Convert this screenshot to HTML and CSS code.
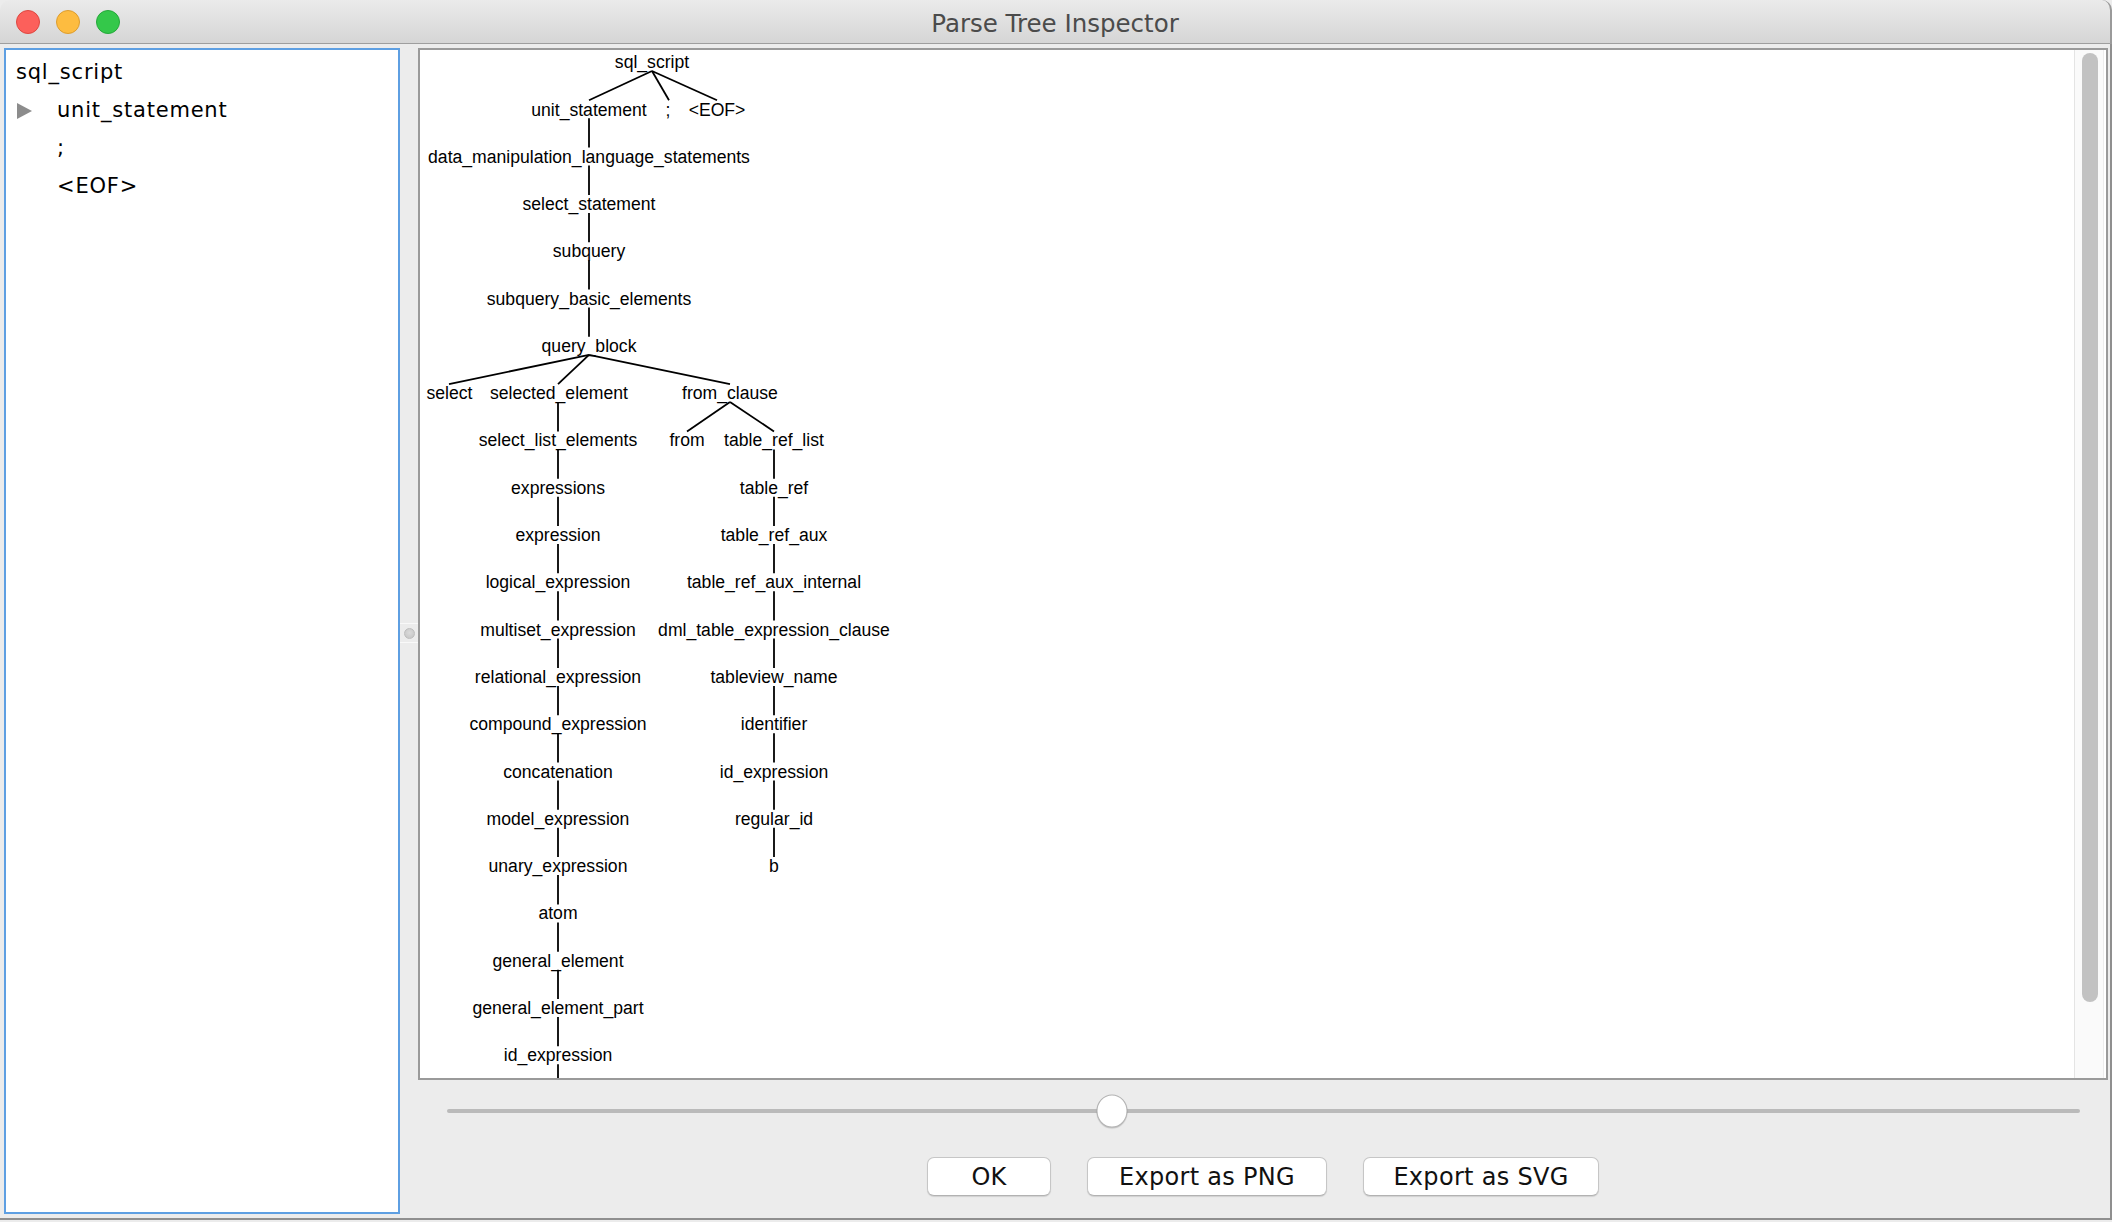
FILE: index.html
```html
<!DOCTYPE html>
<html>
<head>
<meta charset="utf-8">
<title>Parse Tree Inspector</title>
<link rel="stylesheet" href="styles.css">
</head>
<body>
<div class="window">
  <header class="titlebar">
    <div class="lights">
      <span class="light red"></span>
      <span class="light yellow"></span>
      <span class="light green"></span>
    </div>
    <div class="title">Parse Tree Inspector</div>
    <div></div>
  </header>
  <main class="main">
    <section class="outline">
      <div class="row root">sql_script</div>
      <div class="row child">
        <span class="twisty"><svg width="15" height="16" viewBox="0 0 15 16"><polygon points="0,0 15,8 0,16" fill="#8c8c8c"/></svg></span>
        <span>unit_statement</span>
      </div>
      <div class="row child"><span class="twisty"></span><span>;</span></div>
      <div class="row child"><span class="twisty"></span><span>&lt;EOF&gt;</span></div>
    </section>
    <div class="divider">
      <div class="handle"><span class="knob"></span></div>
    </div>
    <section class="right">
      <div class="treepanel">
        <div class="canvas">
          <svg class="tree" width="1653" height="1028" viewBox="0 0 1653 1028">
            <g class="edges" stroke="#000" stroke-width="1.8" fill="none">
              <line x1="232" y1="21" x2="169" y2="50.3"/>
              <line x1="232" y1="21" x2="249" y2="50.3"/>
              <line x1="232" y1="21" x2="297" y2="50.3"/>
              <line x1="169" y1="68.3" x2="169" y2="97.6"/>
              <line x1="169" y1="115.6" x2="169" y2="144.9"/>
              <line x1="169" y1="162.9" x2="169" y2="192.2"/>
              <line x1="169" y1="210.2" x2="169" y2="239.5"/>
              <line x1="169" y1="257.5" x2="169" y2="286.8"/>
              <line x1="169" y1="304.8" x2="29" y2="334.1"/>
              <line x1="169" y1="304.8" x2="138" y2="334.1"/>
              <line x1="169" y1="304.8" x2="310" y2="334.1"/>
              <line x1="138" y1="352.1" x2="138" y2="381.4"/>
              <line x1="310" y1="352.1" x2="267" y2="381.4"/>
              <line x1="310" y1="352.1" x2="354" y2="381.4"/>
              <line x1="138" y1="399.4" x2="138" y2="428.7"/>
              <line x1="138" y1="446.7" x2="138" y2="476"/>
              <line x1="138" y1="494" x2="138" y2="523.3"/>
              <line x1="138" y1="541.3" x2="138" y2="570.6"/>
              <line x1="138" y1="588.6" x2="138" y2="617.9"/>
              <line x1="138" y1="635.9" x2="138" y2="665.2"/>
              <line x1="138" y1="683.2" x2="138" y2="712.5"/>
              <line x1="138" y1="730.5" x2="138" y2="759.8"/>
              <line x1="138" y1="777.8" x2="138" y2="807.1"/>
              <line x1="138" y1="825.1" x2="138" y2="854.4"/>
              <line x1="138" y1="872.4" x2="138" y2="901.7"/>
              <line x1="138" y1="919.7" x2="138" y2="949"/>
              <line x1="138" y1="967" x2="138" y2="996.3"/>
              <line x1="138" y1="1014.3" x2="138" y2="1043.6"/>
              <line x1="354" y1="399.4" x2="354" y2="428.7"/>
              <line x1="354" y1="446.7" x2="354" y2="476"/>
              <line x1="354" y1="494" x2="354" y2="523.3"/>
              <line x1="354" y1="541.3" x2="354" y2="570.6"/>
              <line x1="354" y1="588.6" x2="354" y2="617.9"/>
              <line x1="354" y1="635.9" x2="354" y2="665.2"/>
              <line x1="354" y1="683.2" x2="354" y2="712.5"/>
              <line x1="354" y1="730.5" x2="354" y2="759.8"/>
              <line x1="354" y1="777.8" x2="354" y2="807.1"/>
            </g>
            <g class="labels">
              <text x="232" y="18">sql_script</text>
              <text x="169" y="65.8">unit_statement</text>
              <text x="248" y="65.8">;</text>
              <text x="297" y="65.8">&lt;EOF&gt;</text>
              <text x="169" y="112.6">data_manipulation_language_statements</text>
              <text x="169" y="159.9">select_statement</text>
              <text x="169" y="207.2">subquery</text>
              <text x="169" y="254.5">subquery_basic_elements</text>
              <text x="169" y="301.8">query_block</text>
              <text x="29.5" y="349.1">select</text>
              <text x="139" y="349.1">selected_element</text>
              <text x="310" y="349.1">from_clause</text>
              <text x="138" y="396.4">select_list_elements</text>
              <text x="267" y="396.4">from</text>
              <text x="354" y="396.4">table_ref_list</text>
              <text x="138" y="443.7">expressions</text>
              <text x="138" y="491">expression</text>
              <text x="138" y="538.3">logical_expression</text>
              <text x="138" y="585.6">multiset_expression</text>
              <text x="138" y="632.9">relational_expression</text>
              <text x="138" y="680.2">compound_expression</text>
              <text x="138" y="727.5">concatenation</text>
              <text x="138" y="774.8">model_expression</text>
              <text x="138" y="822.1">unary_expression</text>
              <text x="138" y="869.4">atom</text>
              <text x="138" y="916.7">general_element</text>
              <text x="138" y="964">general_element_part</text>
              <text x="138" y="1011.3">id_expression</text>
              <text x="354" y="443.7">table_ref</text>
              <text x="354" y="491">table_ref_aux</text>
              <text x="354" y="538.3">table_ref_aux_internal</text>
              <text x="354" y="585.6">dml_table_expression_clause</text>
              <text x="354" y="632.9">tableview_name</text>
              <text x="354" y="680.2">identifier</text>
              <text x="354" y="727.5">id_expression</text>
              <text x="354" y="774.8">regular_id</text>
              <text x="354" y="822.1">b</text>
            </g>
          </svg>
        </div>
        <div class="vscroll"><div class="thumb"></div></div>
      </div>
      <div class="slider">
        <div class="track"><span class="sthumb"></span></div>
      </div>
      <div class="buttons">
        <button class="btn ok">OK</button>
        <button class="btn png">Export as PNG</button>
        <button class="btn svg">Export as SVG</button>
      </div>
    </section>
  </main>
</div>
</body>
</html>
```

FILE: styles.css
```css
* { box-sizing: border-box; }
html, body { margin: 0; padding: 0; }
body {
  width: 2112px;
  height: 1222px;
  background: #e9e9e9;
  overflow: hidden;
}
.window {
  width: 2112px;
  height: 1222px;
  background: #ececec;
  display: flex;
  flex-direction: column;
}
.titlebar {
  height: 44px;
  flex: none;
  display: grid;
  grid-template-columns: 1fr auto 1fr;
  align-items: center;
  background: linear-gradient(#ebebeb, #d5d5d5);
  border-bottom: 1px solid #9e9e9e;
  border-radius: 10px 10px 0 0;
  border-right: 2px solid #9a9a9a;
}
.lights {
  display: flex;
  gap: 16px;
  padding-left: 16px;
  padding-top: 1px;
}
.light {
  width: 24px;
  height: 24px;
  border-radius: 50%;
  display: block;
}
.red { background: #fc605b; border: 1px solid #de4740; }
.yellow { background: #fdbc40; border: 1px solid #dd9d2e; }
.green { background: #34c84a; border: 1px solid #25a83a; }
.title {
  font-family: "DejaVu Sans", "Liberation Sans", sans-serif;
  font-size: 24.5px;
  color: #4b4b4b;
  padding-top: 3px;
}
.main {
  height: 1176px;
  flex: none;
  display: flex;
  padding: 4px 2px 4px 4px;
  border-right: 2px solid #8f8f8f;
  border-bottom: 2px solid #8f8f8f;
}
.outline {
  width: 396px;
  flex: none;
  background: #fff;
  border: 2px solid #5e9fe2;
  padding: 3px 10px;
  font-family: "DejaVu Sans", "Liberation Sans", sans-serif;
  font-size: 21px;
  letter-spacing: 0.8px;
  color: #000;
}
.row {
  height: 38px;
  line-height: 38px;
  display: flex;
  align-items: center;
  white-space: nowrap;
}
.twisty {
  width: 41px;
  flex: none;
  display: flex;
  align-items: center;
  padding-left: 1px;
  padding-top: 1px;
}
.twisty svg { display: block; }
.divider {
  width: 18px;
  flex: none;
  display: flex;
  flex-direction: column;
  justify-content: center;
  padding-top: 4px;
}
.handle {
  height: 20px;
  border-top: 1px solid #f9f9f9;
  border-bottom: 1px solid #f9f9f9;
  display: flex;
  align-items: center;
  justify-content: center;
}
.knob {
  width: 11px;
  height: 11px;
  border-radius: 50%;
  background: radial-gradient(circle at 50% 40%, #dadada, #c3c3c3);
  border: 1px solid #bdbdbd;
  display: block;
}
.right {
  flex: 1;
  display: flex;
  flex-direction: column;
  min-width: 0;
}
.treepanel {
  height: 1032px;
  flex: none;
  border: 2px solid #9a9a9a;
  background: #fff;
  display: flex;
  overflow: hidden;
}
.canvas {
  flex: 1;
  overflow: hidden;
  min-width: 0;
}
.tree { display: block; }
.tree text {
  font-family: "Liberation Sans", Arial, sans-serif;
  font-size: 17.6px;
  fill: #000;
  text-anchor: middle;
}
.vscroll {
  width: 30px;
  flex: none;
  margin-right: 2px;
  background: #fafafa;
  border-left: 1px solid #e4e4e4;
  border-right: 1px solid #ececec;
  padding: 3px 0 0 7px;
}
.thumb {
  width: 16px;
  height: 949px;
  border-radius: 8px;
  background: #c2c2c2;
}
.slider {
  height: 62px;
  flex: none;
  display: flex;
  align-items: center;
  padding: 0 28px 0 29px;
}
.track {
  flex: 1;
  height: 4px;
  border-radius: 2px;
  background: #bababa;
  position: relative;
}
.sthumb {
  position: absolute;
  left: 40.7%;
  top: 50%;
  width: 31px;
  height: 33px;
  transform: translate(-50%, -50%);
  border-radius: 50%;
  background: #fff;
  border: 1px solid #b3b3b3;
  box-shadow: 0 1px 1px rgba(0, 0, 0, 0.18);
}
.buttons {
  display: flex;
  justify-content: center;
  gap: 36px;
  padding-top: 15px;
}
.btn {
  height: 39px;
  background: #fff;
  border: 1px solid #c6c6c6;
  border-bottom-color: #b2b2b2;
  border-radius: 7px;
  box-shadow: 0 1px 1px rgba(0, 0, 0, 0.12);
  font-family: "DejaVu Sans", "Liberation Sans", sans-serif;
  font-size: 24px;
  letter-spacing: 0.3px;
  color: #111;
  padding: 0;
  margin: 0;
}
.ok { width: 124px; }
.png { width: 240px; }
.svg { width: 236px; }
```
